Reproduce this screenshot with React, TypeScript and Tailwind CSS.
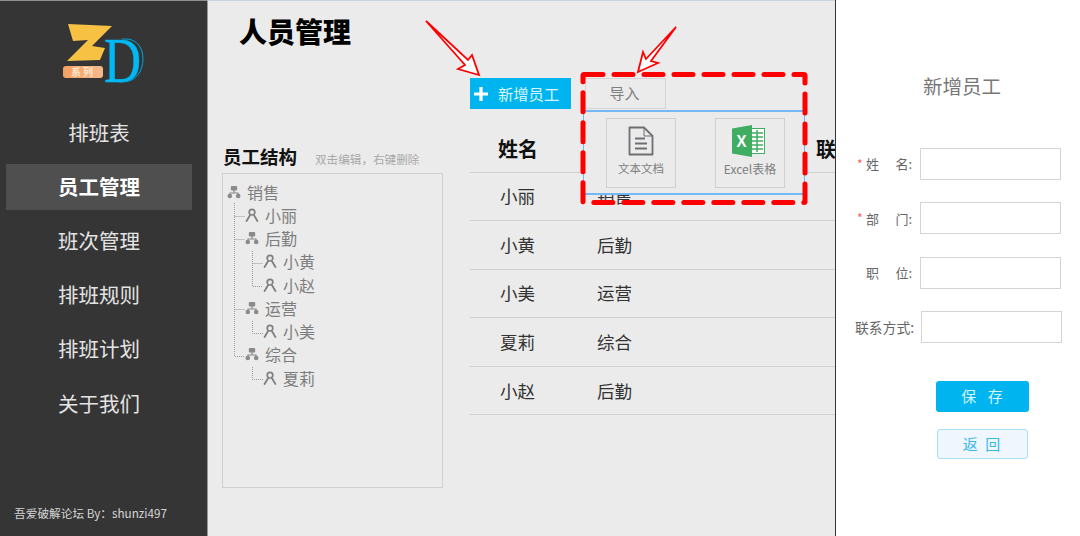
import React from 'react';

const CJK = "font-['Noto_Sans_CJK_SC','Noto_Sans',sans-serif]";

const navItems = ['排班表', '员工管理', '班次管理', '排班规则', '排班计划', '关于我们'];

const rows = [
  { name: '小丽', dept: '销售' },
  { name: '小黄', dept: '后勤' },
  { name: '小美', dept: '运营' },
  { name: '夏莉', dept: '综合' },
  { name: '小赵', dept: '后勤' },
];

const tree = [
  { label: '销售', depth: 0, group: true },
  { label: '小丽', depth: 1, group: false },
  { label: '后勤', depth: 1, group: true },
  { label: '小黄', depth: 2, group: false },
  { label: '小赵', depth: 2, group: false },
  { label: '运营', depth: 1, group: true },
  { label: '小美', depth: 2, group: false },
  { label: '综合', depth: 1, group: true },
  { label: '夏莉', depth: 2, group: false },
];

const Logo = () => (
  <svg width="90" height="80" viewBox="0 0 90 80" className="block">
    <defs>
      <linearGradient id="pill" x1="0" x2="1" y1="0" y2="0">
        <stop offset="0" stopColor="#f5a25f" />
        <stop offset="1" stopColor="#f4b98c" />
      </linearGradient>
    </defs>
    <polygon points="6,2 50,4 30,24 43,26 38,38 5,39 26,18 11,19" fill="#f7c144" />
    <rect x="1" y="44" width="40" height="12" rx="3" fill="url(#pill)" />
    <text x="21" y="54" textAnchor="middle" fontSize="10" fontWeight="700" letterSpacing="2" fill="#ffe6cd" fontFamily="Noto Sans CJK SC">系列</text>
    <text x="42" y="60" fontSize="64" fontFamily="Liberation Serif" fill="#00b9f4" stroke="#00b9f4" strokeWidth="0.5" textLength="37" lengthAdjust="spacingAndGlyphs">D</text>
    <path d="M60 17h4c11 0 17 9 17 20 0 13-8 23-20 23h-4" fill="none" stroke="#00a7dc" strokeWidth="1" />
  </svg>
);

const GroupIcon = () => (
  <svg width="14" height="14" viewBox="0 0 14 14" fill="none" className="shrink-0">
    <rect x="3.8" y="1" width="6.4" height="4.4" rx="1" fill="#8a8a8a" />
    <path d="M7 5v3M3 10V8h8v2" stroke="#8a8a8a" strokeWidth="1.2" />
    <circle cx="2.8" cy="11" r="2.3" fill="#8a8a8a" />
    <circle cx="11.2" cy="11" r="2.3" fill="#8a8a8a" />
  </svg>
);

const PersonIcon = () => (
  <svg width="14" height="14" viewBox="0 0 14 14" fill="none" className="shrink-0">
    <circle cx="7" cy="4.2" r="2.8" stroke="#808080" strokeWidth="1.7" />
    <path d="M5 7.2 1.6 13M9 7.2l3.4 5.8" stroke="#808080" strokeWidth="1.8" strokeLinecap="round" />
  </svg>
);

const TreeLines = () => (
  <svg width="60" height="205" viewBox="0 0 60 205" fill="none" className="absolute left-[11px] top-[25px]" stroke="#9a9a9a" strokeDasharray="1 1">
    <path d="M.5 4V157.5H11" />
    <path d="M.5 17.5H11M.5 40.5H11M.5 110.5H11" />
    <path d="M18.5 52V87.5H29M18.5 64.5H29" />
    <path d="M18.5 122V134.5H29" />
    <path d="M18.5 168V180.5H29" />
  </svg>
);

const DocIcon = () => (
  <svg width="26" height="30" viewBox="0 0 26 30" fill="none" stroke="#6f6f73" strokeWidth="1.8">
    <path d="M1.5 1.5H16L24.5 10V28.5H1.5Z" strokeLinejoin="round" />
    <path d="M16 1.5V10H24.5" strokeWidth="1" />
    <path d="M7 12.5H17M7 17.5H19M7 22.5H19" />
  </svg>
);

const ExcelIcon = () => (
  <svg width="33" height="32" viewBox="0 0 33 32" className="block mr-[4px]">
    <rect x="17" y="3.5" width="15.5" height="25" fill="#fff" stroke="#3fae62" strokeWidth="1" />
    <path d="M20 8h11M20 12h11M20 16h11M20 20h11M20 24h11M25 5v22" stroke="#3fae62" strokeWidth="1.5" />
    <polygon points="0,3.5 20,0 20,32 0,28.5" fill="#3fae62" />
    <text x="9.5" y="21.5" textAnchor="middle" fontSize="17" fontWeight="700" fill="#fff" fontFamily="Liberation Sans" textLength="10" lengthAdjust="spacingAndGlyphs">X</text>
  </svg>
);

const FormField = ({ label, required, wide }: { label: React.ReactNode; required?: boolean; wide?: boolean }) => (
  <div className={`flex items-center h-[32px] ${wide ? 'pl-[19px]' : 'pl-[21px]'}`}>
    <span className={`w-[9px] text-[#ff5a5a] text-[12px] leading-none ${wide ? 'hidden' : ''}`}>{required ? '*' : ''}</span>
    <span className={`text-[#666] whitespace-nowrap ${wide ? 'w-[66px] text-[13.8px]' : 'w-[54px] text-[13px]'}`}>{label}</span>
    <div className="w-[141px] h-[32px] border border-[#d4d4d4] bg-white" />
  </div>
);

export default function App() {
  return (
    <div className={`relative flex w-[1080px] h-[536px] overflow-hidden bg-[#ebebeb] ${CJK}`}>
      {/* sidebar */}
      <aside className="w-[207px] shrink-0 h-full flex flex-col bg-[#353535] border-t border-[#8f8f8f] px-[6px]">
        <div className="pl-[56px] pt-[21px] h-[109px]">
          <Logo />
        </div>
        <nav className="flex flex-col">
          {navItems.map((item) => (
            <div
              key={item}
              className={`w-[186px] h-[46px] mb-[8.2px] pb-[2px] flex items-center justify-center text-[20.5px] ${
                item === '员工管理' ? 'bg-[#4f4f4f] text-white font-bold' : 'text-[#e4e4e4]'
              }`}
            >
              {item}
            </div>
          ))}
        </nav>
        <div className="mt-auto mb-[15px] pl-[8px] text-[11.7px] leading-[16px] text-[#d5d5d5] whitespace-nowrap">
          吾爱破解论坛 By：shunzi497
        </div>
      </aside>

      {/* main */}
      <main className="flex-1 min-w-0 overflow-hidden h-full border-t border-l border-t-[#c9d4dc] border-l-[#8f9aa0] pl-[14px]">
        <h1 className="pl-[17px] pt-[10px] h-[77px] text-[28px] leading-[40px] font-black text-black">人员管理</h1>
        <div className="flex">
          <div className="w-[248px] shrink-0 pt-[65px]">
            <div className="flex items-baseline h-[30px]">
              <span className="pl-[1px] text-[18.5px] font-bold text-[#111]">员工结构</span>
              <span className="ml-[18px] text-[11.6px] text-[#a8a8a8]">双击编辑，右键删除</span>
            </div>
            <div className="relative w-[221px] h-[315px] border border-[#cfcfcf] pt-[6px] pl-[4px]">
              <TreeLines />
              {tree.map((node) => (
                <div
                  key={node.label}
                  className={`relative flex items-center gap-[6px] h-[23.25px] text-[16px] text-[#7d7d7d] ${
                    node.depth === 1 ? 'pl-[18px]' : node.depth === 2 ? 'pl-[36px]' : ''
                  }`}
                >
                  {node.group ? <GroupIcon /> : <PersonIcon />}
                  {node.label}
                </div>
              ))}
            </div>
          </div>

          <div className="w-[385px] shrink-0">
            <div className="flex gap-[14px]">
              <button className="w-[101px] h-[31px] flex items-center bg-[#00b4ef] text-[#d8f4ff] text-[15.3px] pl-[4px]">
                <svg width="14" height="14" viewBox="0 0 13 13" fill="#fff" className="mr-[10px]">
                  <path d="M5 0h3v5h5v3H8v5H5V8H0V5h5z" />
                </svg>
                新增员工
              </button>
              <button className="w-[81px] h-[31px] border border-[#d4d4d4] text-[15px] text-[#808080] pr-[2px]">导入</button>
            </div>
            <table className="w-[385px] table-fixed mt-[20px] border-collapse text-left text-[#333]">
              <thead>
                <tr className="h-[43px] border-b border-[#cfcfcf] text-[20px] text-[#111]">
                  <th className="w-[127px] pl-[28px] pb-[2px] font-bold">姓名</th>
                  <th className="w-[219px] font-bold" />
                  <th className="w-[39px] pb-[2px] font-bold">联</th>
                </tr>
              </thead>
              <tbody>
                {rows.map((r) => (
                  <tr key={r.name} className="h-[48.6px] border-b border-[#cfcfcf] text-[17.5px]">
                    <td className="pl-[30px]">{r.name}</td>
                    <td colSpan={2}>{r.dept}</td>
                  </tr>
                ))}
              </tbody>
            </table>
          </div>
        </div>
      </main>

      {/* add employee panel */}
      <section className="w-[245px] shrink-0 h-full bg-white border-l border-[#333]">
        <h2 className="h-[148px] pt-[71px] pl-[8px] text-center text-[19.5px] leading-[30px] text-[#777]">新增员工</h2>
        <div className="flex flex-col gap-[22.3px]">
          <FormField required label={<span className="inline-flex w-[46px] justify-between">姓<span>名:</span></span>} />
          <FormField required label={<span className="inline-flex w-[46px] justify-between">部<span>门:</span></span>} />
          <FormField label={<span className="inline-flex w-[46px] justify-between">职<span>位:</span></span>} />
          <FormField wide label="联系方式:" />
        </div>
        <div className="flex flex-col items-center mt-[38px] pl-[49px]">
          <button className="w-[93px] h-[31px] pl-[3px] rounded-[3px] bg-[#00b4ef] text-[15px] tracking-[4px] text-[#d8f4ff]">保 存</button>
          <button className="w-[91px] h-[30px] mt-[17px] rounded-[3px] border border-[#a5e0f8] bg-[#eff6fd] text-[15px] tracking-[2px] text-[#39b9ea]">返 回</button>
        </div>
      </section>

      {/* import popover, sits on top of the table */}
      <div className="absolute left-[583px] top-[110px] w-[222px] h-[85px] flex gap-[39px] pt-[6px] pl-[22px] border-y-2 border-x border-[#74b8f5] bg-[#ebebeb]">
        <div className="w-[70px] h-[70px] flex flex-col items-center pt-[7px] border border-[#d0d0d0]">
          <DocIcon />
          <span className="mt-[3px] text-[11.5px] leading-[18px] text-[#808080]">文本文档</span>
        </div>
        <div className="w-[70px] h-[70px] flex flex-col items-center pt-[6px] border border-[#d0d0d0]">
          <ExcelIcon />
          <span className="mt-[3px] text-[12px] leading-[18px] text-[#808080] whitespace-nowrap">Excel表格</span>
        </div>
      </div>

      {/* red annotations */}
      <svg width="1080" height="536" viewBox="0 0 1080 536" fill="none" className="absolute inset-0 pointer-events-none">
        <rect x="583" y="74.5" width="222" height="128" rx="1" stroke="#f00" strokeWidth="5" strokeDasharray="19 11" strokeLinecap="round" strokeLinejoin="round" />
        <path d="M426 21 468 60 472 55 479 75 458 69 465 65Z" fill="#fff" stroke="#f00" strokeWidth="1.8" />
        <path d="M676 27 646 59 643 52 638 72 658 63 651 61Z" fill="#fff" stroke="#f00" strokeWidth="1.8" />
      </svg>
    </div>
  );
}
